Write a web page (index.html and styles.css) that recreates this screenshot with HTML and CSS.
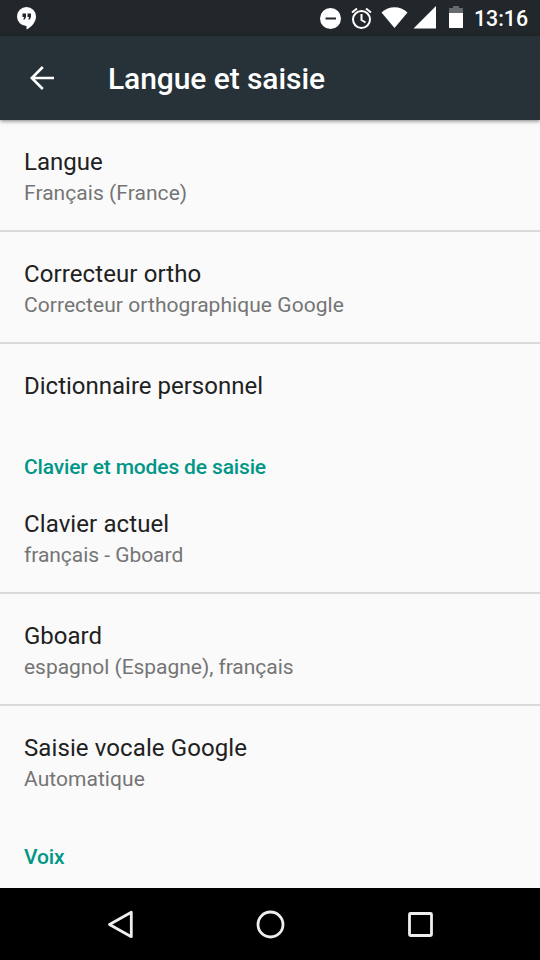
FILE: index.html
```html
<!DOCTYPE html>
<html lang="fr">
<head>
<meta charset="utf-8">
<title>Langue et saisie</title>
<link rel="stylesheet" href="styles.css">
</head>
<body>
<div class="screen">
  <div class="status">
    <svg class="status-icons" width="540" height="36" viewBox="0 0 540 36" fill="#fff">
      <path fill-rule="evenodd" d="M26.500 7a9.500 9.500 0 0 0 0 19v3.500c5-2.500 9.500-7.500 9.500-13A9.500 9.500 0 0 0 26.500 7zM22.500 13.500h3.500v3.500l-1.200 2.500h-1.600l1-2.500h-1.700zM27.500 13.500h3.500v3.500l-1.200 2.500h-1.600l1-2.500h-1.700z"/>
      <path fill-rule="evenodd" d="M330.500 8a10.500 10.500 0 1 0 0 21 10.500 10.500 0 0 0 0-21zM325.500 17.500h10.500v2h-10.500z"/>
      <g fill="none" stroke="#fff" stroke-width="2"><circle cx="361.500" cy="19.500" r="8.500"/><path d="M361.500 14v6l4 2.500M352 12.500l5-4M366 8.500l5 4"/></g>
      <path d="M381.500 12.500C389 5.500 400 5.500 407.500 12.500L394.500 28z"/>
      <path d="M436 6v22.500h-22.500z"/>
      <path fill="#666a6c" d="M449 8h4V6h6v2h4v5h-14z"/><path d="M449 13h14v15h-14z"/>
    </svg>
    <span class="clock">13:16</span>
  </div>
  <header class="appbar">
    <svg class="back" width="24" height="24" viewBox="0 0 24 24" fill="none" stroke="#fff" stroke-width="2.600"><path d="M24 12H2M12.800 1L1.800 12l11 11"/></svg>
    <h1>Langue et saisie</h1>
  </header>
  <main class="list">
    <div class="item first"><div class="title">Langue</div><div class="sub">Français (France)</div></div>
    <div class="item line"><div class="title wide">Correcteur ortho</div><div class="sub">Correcteur orthographique Google</div></div>
    <div class="item line single"><div class="title">Dictionnaire personnel</div></div>
    <h2>Clavier et modes de saisie</h2>
    <div class="item first"><div class="title wide">Clavier actuel</div><div class="sub tight">français - Gboard</div></div>
    <div class="item line"><div class="title">Gboard</div><div class="sub tight">espagnol (Espagne), français</div></div>
    <div class="item line"><div class="title wide">Saisie vocale Google</div><div class="sub">Automatique</div></div>
    <h2>Voix</h2>
  </main>
  <nav class="navbar">
    <svg width="540" height="72" viewBox="0 0 540 72" fill="none" stroke="#eee" stroke-width="2.800"><path d="M131.300 24.300v24.400L109.500 36.500z" stroke-linejoin="round"/><circle cx="270.500" cy="36.500" r="12.500"/><rect x="409.500" y="25.500" width="22" height="22" rx="1"/></svg>
  </nav>
</div>
</body>
</html>
```
FILE: styles.css
```css
* { box-sizing: border-box; }
body { margin: 0; font-family: Roboto, sans-serif; background: #fafafa; }
.screen { width: 540px; height: 960px; display: flex; flex-direction: column; overflow: hidden; }
svg { display: block; }
.status { height: 36px; flex: none; background: #21272b; display: grid; color: #fff; }
.status-icons, .clock { grid-area: 1 / 1; }
.clock { justify-self: end; padding-right: 12px; font-size: 21.3px; font-weight: 500; line-height: 38px; }
.appbar { height: 84px; flex: none; background: #263238; display: flex; align-items: center; padding-left: 30px; gap: 54px; box-shadow: 0 1px 4px rgba(0,0,0,.5); z-index: 1; }
h1 { margin: 2px 0 0; color: #fff; font-size: 30px; font-weight: 500; line-height: 36px; letter-spacing: -.08px; }
.list { flex: 1; min-height: 0; overflow: hidden; }
.item { height: 112px; padding: 28px 24px 0; }
.first { height: 110px; }
.line { border-top: 2px solid #dadada; }
.single { height: 84px; }
.title { color: #212121; font-size: 24px; line-height: 28px; }
.wide { letter-spacing: .1px; }
.sub { color: #757575; font-size: 21px; line-height: 25px; margin-top: 5px; letter-spacing: .05px; }
.tight { letter-spacing: -.04px; }
h2 { margin: 0; height: 56px; padding: 29px 24px 0; color: #009688; font-size: 21px; font-weight: 500; line-height: 25px; letter-spacing: -.15px; }
.navbar { height: 72px; flex: none; background: #000; }
```
